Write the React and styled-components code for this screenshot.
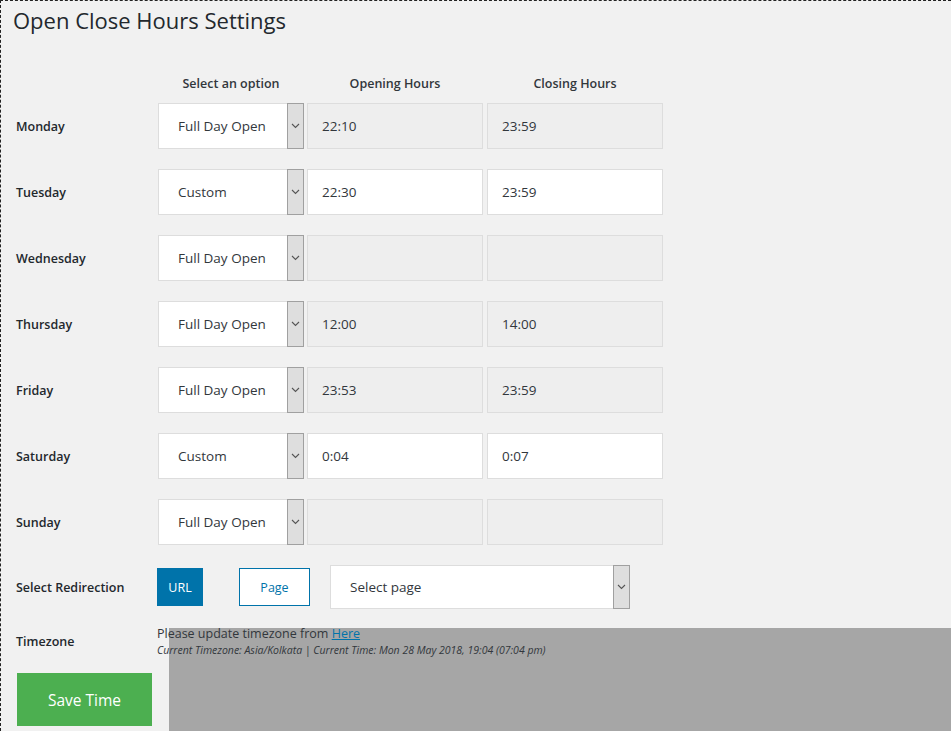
import React from 'react';
import styled, { createGlobalStyle } from 'styled-components';

const GlobalStyle = createGlobalStyle`
  html, body {
    margin: 0;
    padding: 0;
    background: #f1f1f1;
  }
  body {
    font-family: 'Open Sans', 'Noto Sans', sans-serif;
    color: #23282d;
    overflow: hidden;
  }
`;

const Page = styled.div`
  position: relative;
  width: 951px;
  height: 731px;
  box-sizing: border-box;
  border-top: 1px dashed #222;
  border-left: 1px dashed #222;
  background: #f1f1f1;
  overflow: hidden;
`;

const Title = styled.h1`
  margin: 0;
  padding: 4px 0 0 12px;
  font-size: 22px;
  font-weight: 400;
  line-height: 30px;
  color: #23282d;
`;

const Form = styled.div`
  padding: 38px 0 0 15px;
  display: flex;
  flex-direction: column;
`;

const HeaderRow = styled.div`
  display: flex;
  align-items: center;
  height: 20px;
  margin-bottom: 10px;
`;

const HeaderCell = styled.div`
  width: ${({ $w }) => $w}px;
  margin-right: ${({ $gap }) => $gap || 0}px;
  text-align: center;
  font-size: 12.5px;
  font-weight: 600;
  color: #32373c;
`;

const Row = styled.div`
  display: flex;
  align-items: center;
  height: ${({ $h }) => $h || 46}px;
  margin-bottom: ${({ $mb }) => ($mb === undefined ? 20 : $mb)}px;
`;

const Label = styled.div`
  width: ${({ $w }) => $w || 142}px;
  flex-shrink: 0;
  font-size: 12.5px;
  font-weight: 600;
  color: #23282d;
`;

const Select = styled.div`
  display: flex;
  width: ${({ $w }) => $w}px;
  height: ${({ $h }) => $h || 46}px;
  margin-right: ${({ $gap }) => $gap || 0}px;
  box-sizing: border-box;
  flex-shrink: 0;
`;

const SelectValue = styled.div`
  flex: 1;
  display: flex;
  align-items: center;
  padding-left: ${({ $pad }) => $pad || 19}px;
  background: #fff;
  border: 1px solid #ddd;
  border-right: none;
  font-size: 13.5px;
  color: #32373c;
  white-space: nowrap;
`;

const Arrow = styled.div`
  width: 17px;
  box-sizing: border-box;
  background: #dedede;
  border: 1px solid #a0a0a0;
  display: flex;
  align-items: center;
  justify-content: center;
`;

const Input = styled.div`
  width: 176px;
  height: 46px;
  box-sizing: border-box;
  margin-right: ${({ $gap }) => $gap || 0}px;
  padding-left: 14px;
  display: flex;
  align-items: center;
  border: 1px solid #ddd;
  background: ${({ $disabled }) => ($disabled ? '#eeeeee' : '#fff')};
  font-size: 13.5px;
  color: #32373c;
`;

const ToggleButton = styled.button`
  height: 38px;
  width: ${({ $w }) => $w}px;
  margin-right: ${({ $gap }) => $gap}px;
  box-sizing: border-box;
  border: 1px solid #0073aa;
  background: ${({ $active }) => ($active ? '#0073aa' : '#fff')};
  color: ${({ $active }) => ($active ? '#fff' : '#0073aa')};
  font-family: inherit;
  font-size: 12.5px;
  padding: 0;
  flex-shrink: 0;
`;

const TzText = styled.div`
  position: relative;
  z-index: 1;
  display: flex;
  flex-direction: column;
`;

const TzLine = styled.div`
  font-size: 12.5px;
  line-height: 17px;
  color: #32373c;

  a {
    color: #0073aa;
    text-decoration: underline;
  }
`;

const TzNote = styled.div`
  font-size: 10.5px;
  font-style: italic;
  line-height: 15px;
  color: #32373c;
  margin-top: 1px;
`;

const SaveButton = styled.button`
  width: 135px;
  height: 53px;
  margin: 14px 0 0 1px;
  border: none;
  background: #4caf50;
  color: #fff;
  font-family: inherit;
  font-size: 15.5px;
  padding: 0;
`;

const Shade = styled.div`
  position: absolute;
  left: 168px;
  top: 627px;
  right: 0;
  bottom: 0;
  background: #a6a6a6;
  z-index: 0;
`;

const Chevron = () => (
  <svg width="9" height="6" viewBox="0 0 9 6">
    <polyline points="1,1 4.5,4.5 8,1" fill="none" stroke="#555" strokeWidth="1.1" />
  </svg>
);

const days = [
  { name: 'Monday', option: 'Full Day Open', open: '22:10', close: '23:59', disabled: true },
  { name: 'Tuesday', option: 'Custom', open: '22:30', close: '23:59', disabled: false },
  { name: 'Wednesday', option: 'Full Day Open', open: '', close: '', disabled: true },
  { name: 'Thursday', option: 'Full Day Open', open: '12:00', close: '14:00', disabled: true },
  { name: 'Friday', option: 'Full Day Open', open: '23:53', close: '23:59', disabled: true },
  { name: 'Saturday', option: 'Custom', open: '0:04', close: '0:07', disabled: false },
  { name: 'Sunday', option: 'Full Day Open', open: '', close: '', disabled: true },
];

const App = () => {
  return (
    <Page>
      <GlobalStyle />
      <Title>Open Close Hours Settings</Title>
      <Form>
        <HeaderRow>
          <Label />
          <HeaderCell $w={146} $gap={3}>Select an option</HeaderCell>
          <HeaderCell $w={176} $gap={4}>Opening Hours</HeaderCell>
          <HeaderCell $w={176}>Closing Hours</HeaderCell>
        </HeaderRow>

        {days.map(day => (
          <Row key={day.name}>
            <Label>{day.name}</Label>
            <Select $w={146} $gap={3}>
              <SelectValue>{day.option}</SelectValue>
              <Arrow>
                <Chevron />
              </Arrow>
            </Select>
            <Input $gap={4} $disabled={day.disabled}>{day.open}</Input>
            <Input $disabled={day.disabled}>{day.close}</Input>
          </Row>
        ))}

        <Row $h={44} $mb={14}>
          <Label $w={141}>Select Redirection</Label>
          <ToggleButton $active $w={46} $gap={36}>URL</ToggleButton>
          <ToggleButton $w={71} $gap={20}>Page</ToggleButton>
          <Select $w={300} $h={44}>
            <SelectValue>Select page</SelectValue>
            <Arrow>
              <Chevron />
            </Arrow>
          </Select>
        </Row>

        <Row $h={36} $mb={0}>
          <Label $w={141}>Timezone</Label>
          <TzText>
            <TzLine>
              Please update timezone from <a href="#">Here</a>
            </TzLine>
            <TzNote>Current Timezone: Asia/Kolkata | Current Time: Mon 28 May 2018, 19:04 (07:04 pm)</TzNote>
          </TzText>
        </Row>

        <SaveButton>Save Time</SaveButton>
      </Form>
      <Shade />
    </Page>
  );
};

export default App;
